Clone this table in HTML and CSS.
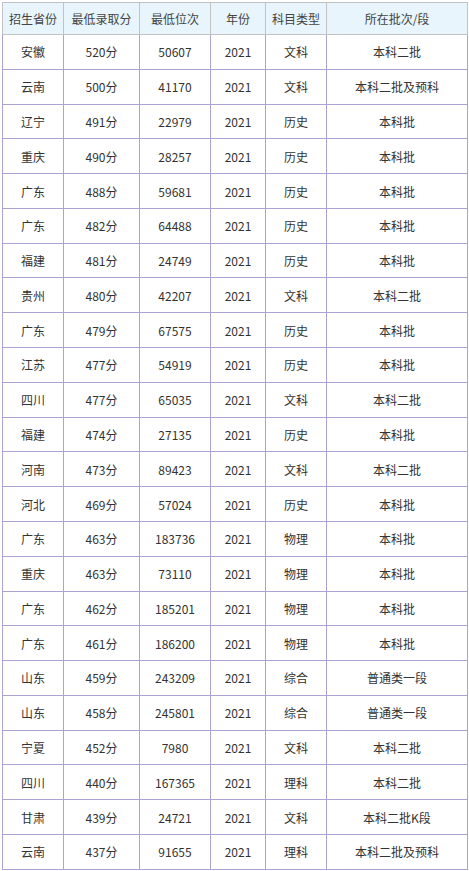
FILE: index.html
```html
<!DOCTYPE html>
<html lang="zh">
<head>
<meta charset="utf-8">
<title>录取分数</title>
<link rel="stylesheet" href="styles.css">
</head>
<body>
<table class="score-table">
<colgroup>
<col class="c1"><col class="c2"><col class="c3"><col class="c4"><col class="c5"><col class="c6">
</colgroup>
<thead>
<tr><th>招生省份</th><th>最低录取分</th><th>最低位次</th><th>年份</th><th>科目类型</th><th>所在批次/段</th></tr>
</thead>
<tbody>
<tr><td>安徽</td><td>520分</td><td>50607</td><td>2021</td><td>文科</td><td>本科二批</td></tr>
<tr><td>云南</td><td>500分</td><td>41170</td><td>2021</td><td>文科</td><td>本科二批及预科</td></tr>
<tr><td>辽宁</td><td>491分</td><td>22979</td><td>2021</td><td>历史</td><td>本科批</td></tr>
<tr><td>重庆</td><td>490分</td><td>28257</td><td>2021</td><td>历史</td><td>本科批</td></tr>
<tr><td>广东</td><td>488分</td><td>59681</td><td>2021</td><td>历史</td><td>本科批</td></tr>
<tr><td>广东</td><td>482分</td><td>64488</td><td>2021</td><td>历史</td><td>本科批</td></tr>
<tr><td>福建</td><td>481分</td><td>24749</td><td>2021</td><td>历史</td><td>本科批</td></tr>
<tr><td>贵州</td><td>480分</td><td>42207</td><td>2021</td><td>文科</td><td>本科二批</td></tr>
<tr><td>广东</td><td>479分</td><td>67575</td><td>2021</td><td>历史</td><td>本科批</td></tr>
<tr><td>江苏</td><td>477分</td><td>54919</td><td>2021</td><td>历史</td><td>本科批</td></tr>
<tr><td>四川</td><td>477分</td><td>65035</td><td>2021</td><td>文科</td><td>本科二批</td></tr>
<tr><td>福建</td><td>474分</td><td>27135</td><td>2021</td><td>历史</td><td>本科批</td></tr>
<tr><td>河南</td><td>473分</td><td>89423</td><td>2021</td><td>文科</td><td>本科二批</td></tr>
<tr><td>河北</td><td>469分</td><td>57024</td><td>2021</td><td>历史</td><td>本科批</td></tr>
<tr><td>广东</td><td>463分</td><td>183736</td><td>2021</td><td>物理</td><td>本科批</td></tr>
<tr><td>重庆</td><td>463分</td><td>73110</td><td>2021</td><td>物理</td><td>本科批</td></tr>
<tr><td>广东</td><td>462分</td><td>185201</td><td>2021</td><td>物理</td><td>本科批</td></tr>
<tr><td>广东</td><td>461分</td><td>186200</td><td>2021</td><td>物理</td><td>本科批</td></tr>
<tr><td>山东</td><td>459分</td><td>243209</td><td>2021</td><td>综合</td><td>普通类一段</td></tr>
<tr><td>山东</td><td>458分</td><td>245801</td><td>2021</td><td>综合</td><td>普通类一段</td></tr>
<tr><td>宁夏</td><td>452分</td><td>7980</td><td>2021</td><td>文科</td><td>本科二批</td></tr>
<tr><td>四川</td><td>440分</td><td>167365</td><td>2021</td><td>理科</td><td>本科二批</td></tr>
<tr><td>甘肃</td><td>439分</td><td>24721</td><td>2021</td><td>文科</td><td>本科二批K段</td></tr>
<tr><td>云南</td><td>437分</td><td>91655</td><td>2021</td><td>理科</td><td>本科二批及预科</td></tr>
</tbody>
</table>
</body>
</html>
```

FILE: styles.css
```css
html, body {
  margin: 0;
  padding: 0;
  background: #fff;
}
body {
  padding: 2px 0 0 2px;
  font-family: "Noto Sans CJK SC", "Noto Sans", sans-serif;
  font-size: 12px;
  color: #333;
}
.score-table {
  border-collapse: collapse;
  table-layout: fixed;
  width: 465px;
}
.c1 { width: 61px; }
.c2 { width: 76px; }
.c3 { width: 71px; }
.c4 { width: 55px; }
.c5 { width: 61px; }
.c6 { width: 141px; }
.score-table th,
.score-table td {
  padding: 0;
  text-align: center;
  font-weight: normal;
  white-space: nowrap;
}
.score-table th {
  height: 31px;
  background: #e8f5fc;
  border: 1px solid #c2c2c2;
  color: #444;
}
.score-table td {
  height: 33.79px;
  border: 1px solid #aaa3d3;
}
```
